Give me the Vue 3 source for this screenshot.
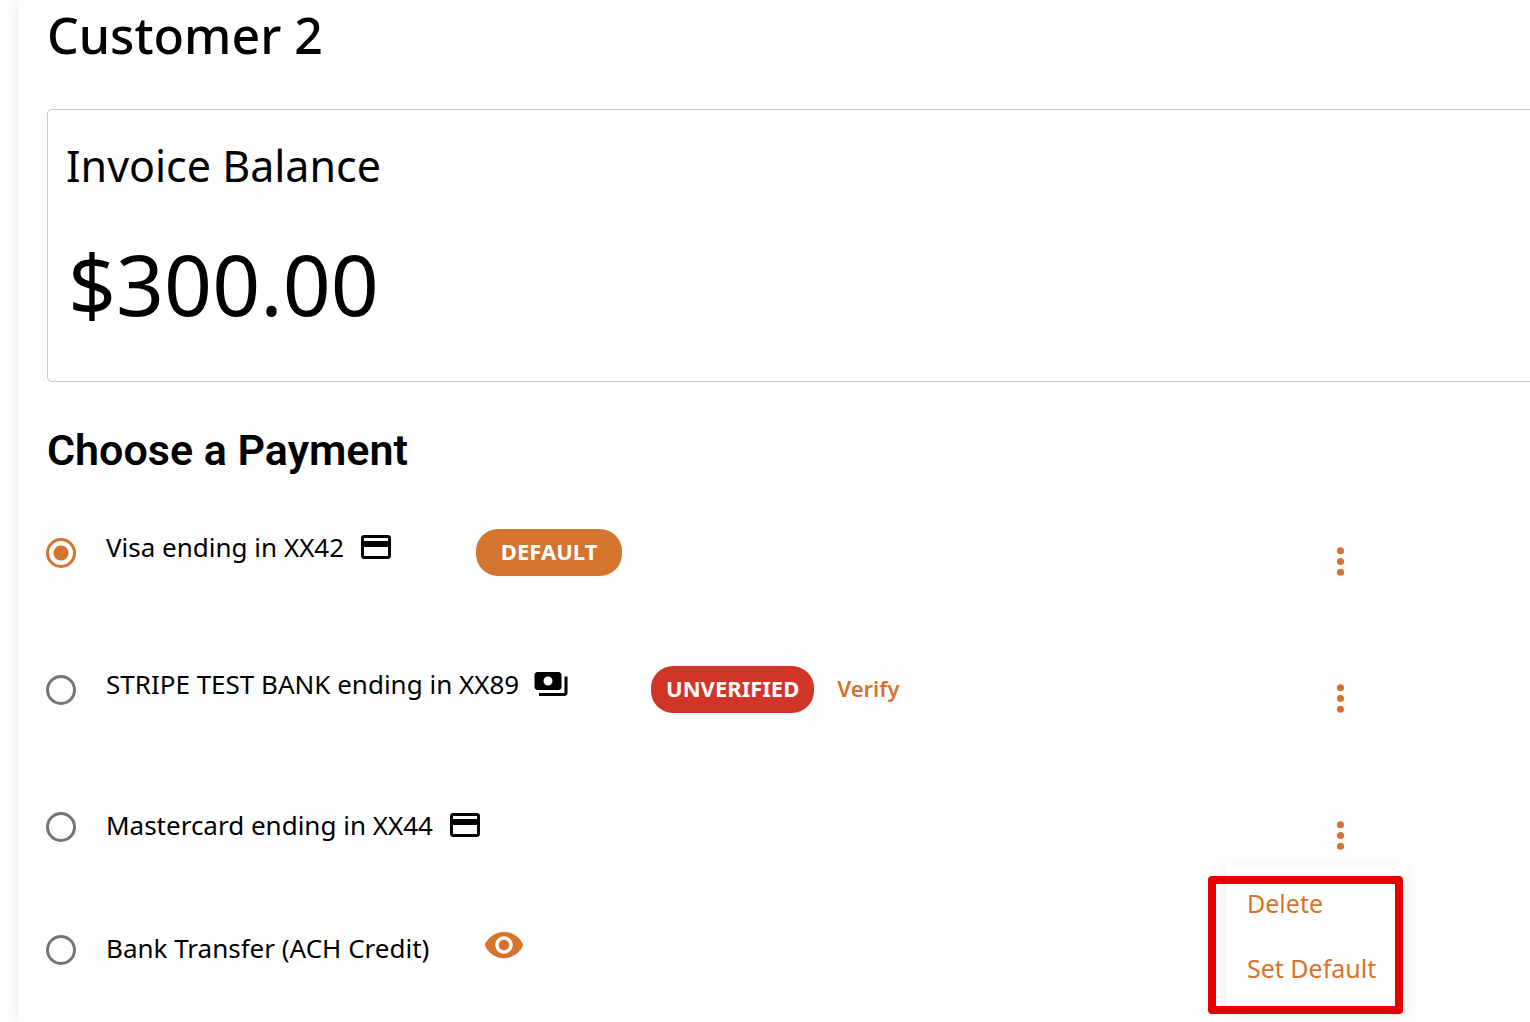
<script setup>
import { ref } from 'vue'

const selected = ref('visa')
const openMenu = ref('mastercard')

const methods = [
  { id: 'visa', label: 'Visa ending in XX42', icon: 'card', badge: 'DEFAULT', tone: 'default', menu: true },
  { id: 'bank', label: 'STRIPE TEST BANK ending in XX89', icon: 'cash', badge: 'UNVERIFIED', tone: 'unverified', verify: true, menu: true },
  { id: 'mastercard', label: 'Mastercard ending in XX44', icon: 'card', menu: true },
  { id: 'ach', label: 'Bank Transfer (ACH Credit)', view: true },
]

function toggle(id) {
  openMenu.value = openMenu.value === id ? '' : id
}
</script>

<template>
  <div class="page">
    <main class="panel">
      <h1 class="customer">Customer 2</h1>

      <section class="balance">
        <h2 class="balance-title">Invoice Balance</h2>
        <p class="balance-amount">$300.00</p>
      </section>

      <h2 class="choose">Choose a Payment</h2>

      <ul class="methods">
        <li v-for="m in methods" :key="m.id" class="method" :class="{ plain: !m.badge, last: m.view }">
          <input :id="m.id" v-model="selected" class="radio" type="radio" name="method" :value="m.id" />
          <label class="name" :for="m.id">
            {{ m.label }}
            <svg v-if="m.icon === 'card'" class="icon" viewBox="0 0 24 24" aria-hidden="true">
              <path d="M20 4H4c-1.11 0-1.99.89-1.99 2L2 18c0 1.11.89 2 2 2h16c1.11 0 2-.89 2-2V6c0-1.11-.89-2-2-2zm0 14H4v-6h16v6zm0-10H4V6h16v2z" />
            </svg>
            <svg v-if="m.icon === 'cash'" class="icon" viewBox="0 0 24 24" aria-hidden="true">
              <path d="M19 14V6c0-1.100-.9-2-2-2H3c-1.100 0-2 .9-2 2v8c0 1.100.9 2 2 2h14c1.100 0 2-.9 2-2zm-9-1c-1.660 0-3-1.340-3-3s1.340-3 3-3 3 1.340 3 3-1.340 3-3 3zm13-6v11c0 1.100-.9 2-2 2H4v-2h17V7h2z" />
            </svg>
          </label>
          <span v-if="m.badge" class="badge" :class="m.tone">{{ m.badge }}</span>
          <a v-if="m.verify" class="verify" href="#verify">Verify</a>
          <button v-if="m.view" class="view" type="button" aria-label="View transfer details">
            <svg viewBox="0 0 24 24" aria-hidden="true">
              <path d="M12 4.500C7 4.500 2.730 7.610 1 12c1.730 4.390 6 7.500 11 7.500s9.270-3.110 11-7.500c-1.730-4.390-6-7.500-11-7.500zM12 17c-2.760 0-5-2.240-5-5s2.240-5 5-5 5 2.240 5 5-2.240 5-5 5zm0-8c-1.660 0-3 1.340-3 3s1.340 3 3 3 3-1.340 3-3-1.340-3-3-3z" />
            </svg>
          </button>
          <div v-if="m.menu" class="actions">
            <button class="more" type="button" :aria-label="'Actions for ' + m.label" @click="toggle(m.id)">
              <svg viewBox="0 0 24 24" aria-hidden="true">
                <circle cx="12" cy="6" r="2" />
                <circle cx="12" cy="12" r="2" />
                <circle cx="12" cy="18" r="2" />
              </svg>
            </button>
            <div v-if="openMenu === m.id" class="menu">
              <button type="button">Delete</button>
              <button type="button">Set Default</button>
              <span class="highlight"></span>
            </div>
          </div>
        </li>
      </ul>
    </main>
  </div>
</template>

<style>
body {
  margin: 0;
  background: #fefefe;
}
</style>

<style scoped>
.page {
  box-sizing: border-box;
  min-height: 100vh;
  padding-left: 18px;
  overflow: hidden;
  color: #000;
  font-family: "Noto Sans", sans-serif;
  background: #fff;
}
.panel {
  box-sizing: border-box;
  min-height: 100vh;
  padding-left: 29px;
  background: #fefefe;
  box-shadow: 0 0 14px rgba(0, 0, 0, 0.1);
  display: flow-root;
}
.customer {
  margin: 0 0 39px;
  font-size: 50px;
  line-height: 70px;
  font-weight: 500;
}
.balance {
  border: 1px solid #c8c8d2;
  border-right: 0;
  border-radius: 5px 0 0 5px;
  padding: 23px 18px 39px;
}
.balance-title {
  margin: 0;
  font-size: 43px;
  line-height: 66px;
  font-weight: 400;
}
.balance-amount {
  margin: 27px 0 0 2px;
  font-size: 84px;
  line-height: 116px;
  font-weight: 400;
}
.choose {
  margin: 41px 0 6px;
  font-family: Roboto, sans-serif;
  font-size: 43px;
  line-height: 55px;
  font-weight: 600;
}
.methods {
  margin: 0 0 0 -1px;
  padding: 0;
  list-style: none;
}
.method {
  display: flex;
  align-items: center;
  height: 137px;
}
.method.last {
  height: 109px;
}
.radio {
  appearance: none;
  box-sizing: border-box;
  width: 30px;
  height: 30px;
  margin: 0 30px 0 0;
  border: 3px solid #757575;
  border-radius: 50%;
  background: transparent;
}
.radio:checked {
  border-color: #d4742f;
  background: radial-gradient(circle, #d4742f 7px, transparent 8px);
}
.name {
  display: flex;
  align-items: center;
  gap: 14px;
  padding-bottom: 12px;
  font-size: 26px;
  line-height: 36px;
}
.plain .name {
  padding-bottom: 4px;
}
.icon {
  width: 36px;
  height: 36px;
}
.badge {
  box-sizing: border-box;
  height: 47px;
  margin-left: 82px;
  border-radius: 22px;
  color: #fff;
  font-size: 22px;
  line-height: 44px;
  font-weight: 700;
  text-align: center;
}
.default {
  width: 146px;
  background: #d4742f;
}
.unverified {
  width: 163px;
  background: #d13528;
}
.verify {
  margin-left: 23px;
  padding-bottom: 4px;
  color: #d4742f;
  font-size: 22px;
  line-height: 30px;
  font-weight: 600;
  text-decoration: none;
}
button {
  padding: 0;
  border: 0;
  background: none;
  color: #d4742f;
  font: inherit;
  cursor: pointer;
}
button svg {
  display: block;
  fill: currentColor;
}
.view {
  margin: 0 0 10px 54px;
}
.view svg {
  width: 42px;
  height: 42px;
}
.actions {
  position: relative;
  margin: 22px 168px 0 auto;
}
.more svg {
  width: 43px;
  height: 43px;
}
.menu {
  position: absolute;
  z-index: 1;
  top: 51px;
  right: -44px;
  box-sizing: border-box;
  display: flex;
  flex-direction: column;
  align-items: flex-start;
  gap: 29px;
  width: 180px;
  height: 144px;
  padding: 20px 21px;
  background: #fff;
  box-shadow: 0 4px 16px rgba(0, 0, 0, 0.08);
}
.menu button {
  font-size: 25px;
  line-height: 36px;
  white-space: nowrap;
}
.highlight {
  position: absolute;
  inset: 11px 3px -5px -18px;
  border: 8px solid #e60000;
  border-radius: 4px;
  pointer-events: none;
}
</style>
